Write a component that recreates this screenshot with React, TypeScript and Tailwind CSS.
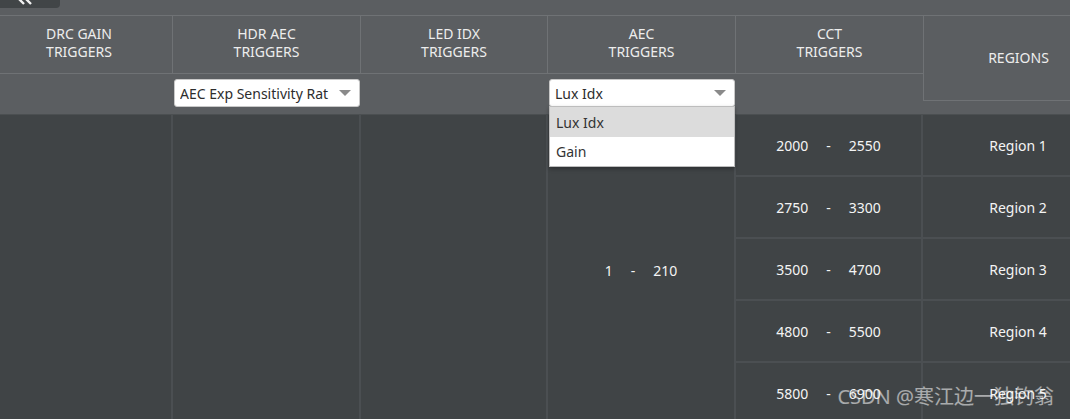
const font = { fontFamily: '"Noto Sans", "Open Sans", sans-serif' }

type Col = { title: string[]; width: string; select?: string; open?: boolean }

const cols: Col[] = [
  { title: ["DRC GAIN", "TRIGGERS"], width: "w-[187px]" },
  { title: ["HDR AEC", "TRIGGERS"], width: "w-[188px]", select: "AEC Exp Sensitivity Rat" },
  { title: ["LED IDX", "TRIGGERS"], width: "w-[187px]" },
  { title: ["AEC", "TRIGGERS"], width: "w-[188px]", select: "Lux Idx", open: true },
  { title: ["CCT", "TRIGGERS"], width: "w-[187px]" },
]

const cct = [
  ["2000", "2550"],
  ["2750", "3300"],
  ["3500", "4700"],
  ["4800", "5500"],
  ["5800", "6900"],
]

const Caret = () => (
  <svg width="12" height="6" viewBox="0 0 12 6" className="shrink-0">
    <path d="M0 0h12L6 6z" fill="#8a8a8a" />
  </svg>
)

const Select = ({ value, open }: { value: string; open?: boolean }) => (
  <div className="relative">
    <div className="flex h-[28px] items-center rounded-[3px] border border-[#c8c8c8] bg-white pl-[5px] pr-[8px]">
      <span className="flex-1 overflow-hidden whitespace-nowrap text-[14px] text-[#2d2d2d]">{value}</span>
      <Caret />
    </div>
    {open && (
      <div className="absolute left-0 right-0 top-[27px] z-10 border border-[#bdbdbd] bg-white shadow-[0_2px_4px_rgba(0,0,0,0.3)]">
        <div className="flex h-[30px] items-center bg-[#dcdcdc] px-[6px] text-[14px] text-[#333]">Lux Idx</div>
        <div className="flex h-[29px] items-center px-[6px] text-[14px] text-[#333]">Gain</div>
      </div>
    )}
  </div>
)

const Range = ({ a, b }: { a: string; b: string }) => (
  <div className="flex items-center justify-center gap-[18px] text-[14px] text-[#f4f4f4]">
    <span>{a}</span>
    <span>-</span>
    <span>{b}</span>
  </div>
)

export default function App() {
  return (
    <div className="relative h-[419px] w-[1070px] overflow-hidden bg-[#5b5e61]" style={font}>
      {/* top strip */}
      <div className="h-[15px]">
        <div className="relative h-[8px] w-[60px] overflow-hidden rounded-br-[4px] bg-[#414547]">
          <svg width="18" height="12" viewBox="0 0 18 12" className="absolute left-[16px] top-[-7px]">
            <path d="M8 1L3 6l5 5M15 1l-5 5 5 5" fill="none" stroke="#f2f2f2" strokeWidth="2.4" />
          </svg>
        </div>
      </div>

      <div className="ml-[-14px] w-[1130px]">
        {/* header rows */}
        <div className="flex">
          {cols.map((c, i) => (
            <div key={i} className={`${c.width} flex flex-col`}>
              <div
                className={`flex h-[59px] flex-col items-center justify-center border-y border-[#6f7275] pb-[3px] text-[14px] leading-[18px] text-[#ededed] ${i < 4 ? "border-r" : ""}`}
              >
                <span>{c.title[0]}</span>
                <span>{c.title[1]}</span>
              </div>
              <div className="h-[40px] px-[1px] pt-[5px]">
                {c.select && <Select value={c.select} open={c.open} />}
              </div>
            </div>
          ))}
          <div className="flex w-[190px] flex-col">
            <div className="flex h-[86px] items-center justify-center border-y border-l border-[#6f7275] pb-[2px] text-[14px] text-[#ededed]">
              REGIONS
            </div>
          </div>
        </div>

        {/* body */}
        <div className="flex h-[312px] border-t border-[#4b4f51] bg-[#404446]">
          <div className="w-[187px] border-r-2 border-[#4b4f52]" />
          <div className="w-[188px] border-r-2 border-[#4b4f52]" />
          <div className="w-[187px] border-r-2 border-[#4b4f52]" />
          <div className="flex w-[188px] items-center justify-center border-r-2 border-[#4b4f52]">
            <Range a="1" b="210" />
          </div>
          <div className="flex w-[187px] flex-col border-r-2 border-[#4b4f52]">
            {cct.map(([a, b]) => (
              <div key={a} className="flex h-[62px] shrink-0 items-center justify-center border-b-2 border-[#4b4f52]">
                <Range a={a} b={b} />
              </div>
            ))}
          </div>
          <div className="flex w-[190px] flex-col">
            {cct.map((_, i) => (
              <div
                key={i}
                className="flex h-[62px] shrink-0 items-center justify-center border-b-2 border-[#4b4f52] text-[14px] text-[#f4f4f4]"
              >
                Region {i + 1}
              </div>
            ))}
          </div>
        </div>
      </div>

      {/* watermark */}
      <div
        className="absolute bottom-[7px] right-[16px] text-[20px] text-white/55"
        style={{ fontFamily: '"Noto Sans", "Noto Sans CJK SC", sans-serif' }}
      >
        CSDN @寒江边一独钓翁
      </div>
    </div>
  )
}
